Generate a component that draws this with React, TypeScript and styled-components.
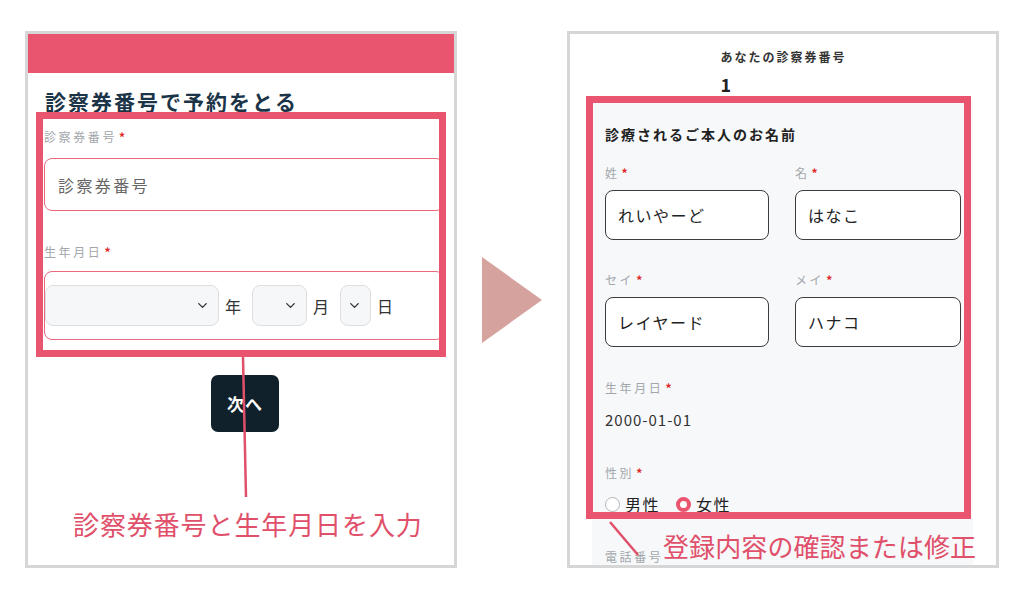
import React from 'react';
import styled, {createGlobalStyle} from "styled-components";
import {ChevronDown} from "lucide-react";

const PINK = '#e9546f';
const NOTE = '#e0506a';

const GlobalStyle = createGlobalStyle`
  html, body {
    margin: 0;
    padding: 0;
    background: #ffffff;
  }
  body {
    font-family: "Noto Sans CJK JP", "Noto Sans", sans-serif;
    color: #222;
  }
  * {
    box-sizing: border-box;
  }
`

const Page = styled.main`
  width: 1025px;
  height: 601px;
  display: flex;
  align-items: flex-start;
  gap: 25px;
  padding: 31px 0 0 25px;
`

const Panel = styled.section`
  position: relative;
  width: 432px;
  height: 537px;
  border: 3px solid #d6d6d6;
  background: #fff;
  overflow: hidden;
  display: flex;
  flex-direction: column;
`

const Header = styled.div`
  height: 39px;
  background: ${PINK};
`

const Body = styled.div`
  display: flex;
  flex-direction: column;
  padding: 0 10px 0 16px;
`

const Title = styled.h1`
  margin: 14px 0 0 1px;
  font-size: 21px;
  line-height: 28px;
  font-weight: 700;
  letter-spacing: 2px;
  color: #1c3447;
`

const Label = styled.div<{ $mt: number }>`
  margin-top: ${p => p.$mt}px;
  font-size: 12px;
  line-height: 18px;
  letter-spacing: 2.6px;
  color: #a3a7ab;
  display: flex;
  align-items: center;
`

const Required = styled.span`
  color: #e02828;
  font-weight: 700;
  margin-left: 2px;
`

const TextField = styled.div`
  margin-top: 12px;
  height: 53px;
  border: 1px solid #ea6a7c;
  border-radius: 8px;
  display: flex;
  align-items: center;
  padding-left: 13px;
  font-size: 16px;
  letter-spacing: 2.4px;
  color: #666;
`

const DateBox = styled.div`
  margin-top: 10px;
  height: 69px;
  border: 1px solid #ea6a7c;
  border-radius: 8px;
  display: flex;
  align-items: center;
`

const Select = styled.div<{ $w: number }>`
  width: ${p => p.$w}px;
  height: 41px;
  background: #f6f7f9;
  border: 1px solid #dedfe3;
  border-radius: 8px;
  display: flex;
  align-items: center;
  justify-content: flex-end;
  padding-right: 8px;
  color: #333;
`

const Unit = styled.span`
  margin: 0 11px 0 6px;
  font-size: 16px;
  color: #333;
`

const NextButton = styled.button`
  margin: 35px 0 0 167px;
  width: 68px;
  height: 57px;
  border: none;
  border-radius: 7px;
  background: #10212b;
  color: #fff;
  font-family: inherit;
  font-size: 17px;
  font-weight: 700;
  letter-spacing: 1px;
`

const Arrow = styled.svg`
  margin-top: 226px;
  flex: none;
`

const NumberBlock = styled.div`
  align-self: center;
  margin-top: 14px;
  width: 126px;
  margin-left: 1px;
`

const NumberCaption = styled.div`
  font-size: 12px;
  line-height: 18px;
  font-weight: 700;
  letter-spacing: 2px;
  color: #333;
  white-space: nowrap;
`

const NumberValue = styled.div`
  margin-top: 6px;
  font-size: 18px;
  line-height: 24px;
  font-weight: 700;
  color: #222;
`

const Card = styled.div`
  margin: 4px 23px 0 22px;
  padding: 24px 12px 40px 13px;
  background: #f7f8fa;
  display: flex;
  flex-direction: column;
`

const CardTitle = styled.div`
  font-size: 14px;
  line-height: 20px;
  font-weight: 700;
  letter-spacing: 2px;
  color: #222;
`

const NameGrid = styled.div<{ $mt: number }>`
  margin-top: ${p => p.$mt}px;
  display: grid;
  grid-template-columns: 164px 166px;
  column-gap: 26px;
`

const Field = styled.div`
  display: flex;
  flex-direction: column;
`

const NameInput = styled.div`
  margin-top: 8px;
  height: 50px;
  border: 1px solid #3c3c3c;
  border-radius: 8px;
  background: #fff;
  display: flex;
  align-items: center;
  padding-left: 12px;
  font-size: 16px;
  letter-spacing: 1.5px;
  color: #222;
`

const Value = styled.div`
  margin-top: 12px;
  font-size: 15px;
  line-height: 22px;
  letter-spacing: 1px;
  color: #333;
`

const RadioRow = styled.div`
  margin-top: 10px;
  display: flex;
  align-items: center;
  height: 24px;
  font-size: 16px;
  letter-spacing: 1.5px;
  color: #222;
`

const Radio = styled.span<{ $on?: boolean }>`
  width: 15px;
  height: 15px;
  border-radius: 50%;
  background: #fff;
  border: ${p => p.$on ? `4px solid ${PINK}` : '1px solid #b4b4b4'};
  margin-right: 5px;
`

const RadioText = styled.span`
  margin-right: 16px;
`

const Highlight = styled.div<{ $l: number; $t: number; $w: number; $h: number }>`
  position: absolute;
  left: ${p => p.$l}px;
  top: ${p => p.$t}px;
  width: ${p => p.$w}px;
  height: ${p => p.$h}px;
  border: 7px solid ${PINK};
  pointer-events: none;
`

const Leader = styled.svg`
  position: absolute;
  left: 0;
  top: 0;
  pointer-events: none;
`

const Note = styled.div<{ $l: number; $t: number; $ls: number }>`
  position: absolute;
  left: ${p => p.$l}px;
  top: ${p => p.$t}px;
  font-size: 26px;
  line-height: 30px;
  color: ${NOTE};
  white-space: nowrap;
  letter-spacing: ${p => p.$ls}px;
`

const Chevron = () => <ChevronDown size={15} strokeWidth={2.2}/>;

const Req = () => <Required>*</Required>;

export default function App() {
    return (
        <>
            <GlobalStyle/>
            <Page>
                <Panel>
                    <Header/>
                    <Body>
                        <Title>診察券番号で予約をとる</Title>
                        <Label $mt={13}>診察券番号 <Req/></Label>
                        <TextField>診察券番号</TextField>
                        <Label $mt={32}>生年月日 <Req/></Label>
                        <DateBox>
                            <Select $w={174}><Chevron/></Select>
                            <Unit>年</Unit>
                            <Select $w={55}><Chevron/></Select>
                            <Unit>月</Unit>
                            <Select $w={31}><Chevron/></Select>
                            <Unit>日</Unit>
                        </DateBox>
                        <NextButton>次へ</NextButton>
                    </Body>
                    <Highlight $l={8} $t={78} $w={410} $h={245}/>
                    <Leader width="426" height="531">
                        <line x1="215" y1="323" x2="218" y2="463" stroke={NOTE} strokeWidth="2.5"/>
                    </Leader>
                    <Note $l={45} $t={475} $ls={0.9}>診察券番号と生年月日を入力</Note>
                </Panel>

                <Arrow width="60" height="86" viewBox="0 0 60 86">
                    <polygon points="0,0 60,43 0,86" fill="#d6a29d"/>
                </Arrow>

                <Panel>
                    <NumberBlock>
                        <NumberCaption>あなたの診察券番号</NumberCaption>
                        <NumberValue>1</NumberValue>
                    </NumberBlock>
                    <Card>
                        <CardTitle>診療されるご本人のお名前</CardTitle>
                        <NameGrid $mt={20}>
                            <Field>
                                <Label $mt={0}>姓 <Req/></Label>
                                <NameInput>れいやーど</NameInput>
                            </Field>
                            <Field>
                                <Label $mt={0}>名 <Req/></Label>
                                <NameInput>はなこ</NameInput>
                            </Field>
                        </NameGrid>
                        <NameGrid $mt={31}>
                            <Field>
                                <Label $mt={0}>セイ <Req/></Label>
                                <NameInput>レイヤード</NameInput>
                            </Field>
                            <Field>
                                <Label $mt={0}>メイ <Req/></Label>
                                <NameInput>ハナコ</NameInput>
                            </Field>
                        </NameGrid>
                        <Label $mt={32}>生年月日 <Req/></Label>
                        <Value>2000-01-01</Value>
                        <Label $mt={33}>性別 <Req/></Label>
                        <RadioRow>
                            <Radio/>
                            <RadioText>男性</RadioText>
                            <Radio $on/>
                            <RadioText>女性</RadioText>
                        </RadioRow>
                        <Label $mt={32}>電話番号</Label>
                    </Card>
                    <Highlight $l={16} $t={62} $w={385} $h={423}/>
                    <Leader width="426" height="531">
                        <line x1="40" y1="488" x2="68" y2="521" stroke={NOTE} strokeWidth="2.5"/>
                    </Leader>
                    <Note $l={93} $t={497} $ls={0.1}>登録内容の確認または修正</Note>
                </Panel>
            </Page>
        </>
    );
}
